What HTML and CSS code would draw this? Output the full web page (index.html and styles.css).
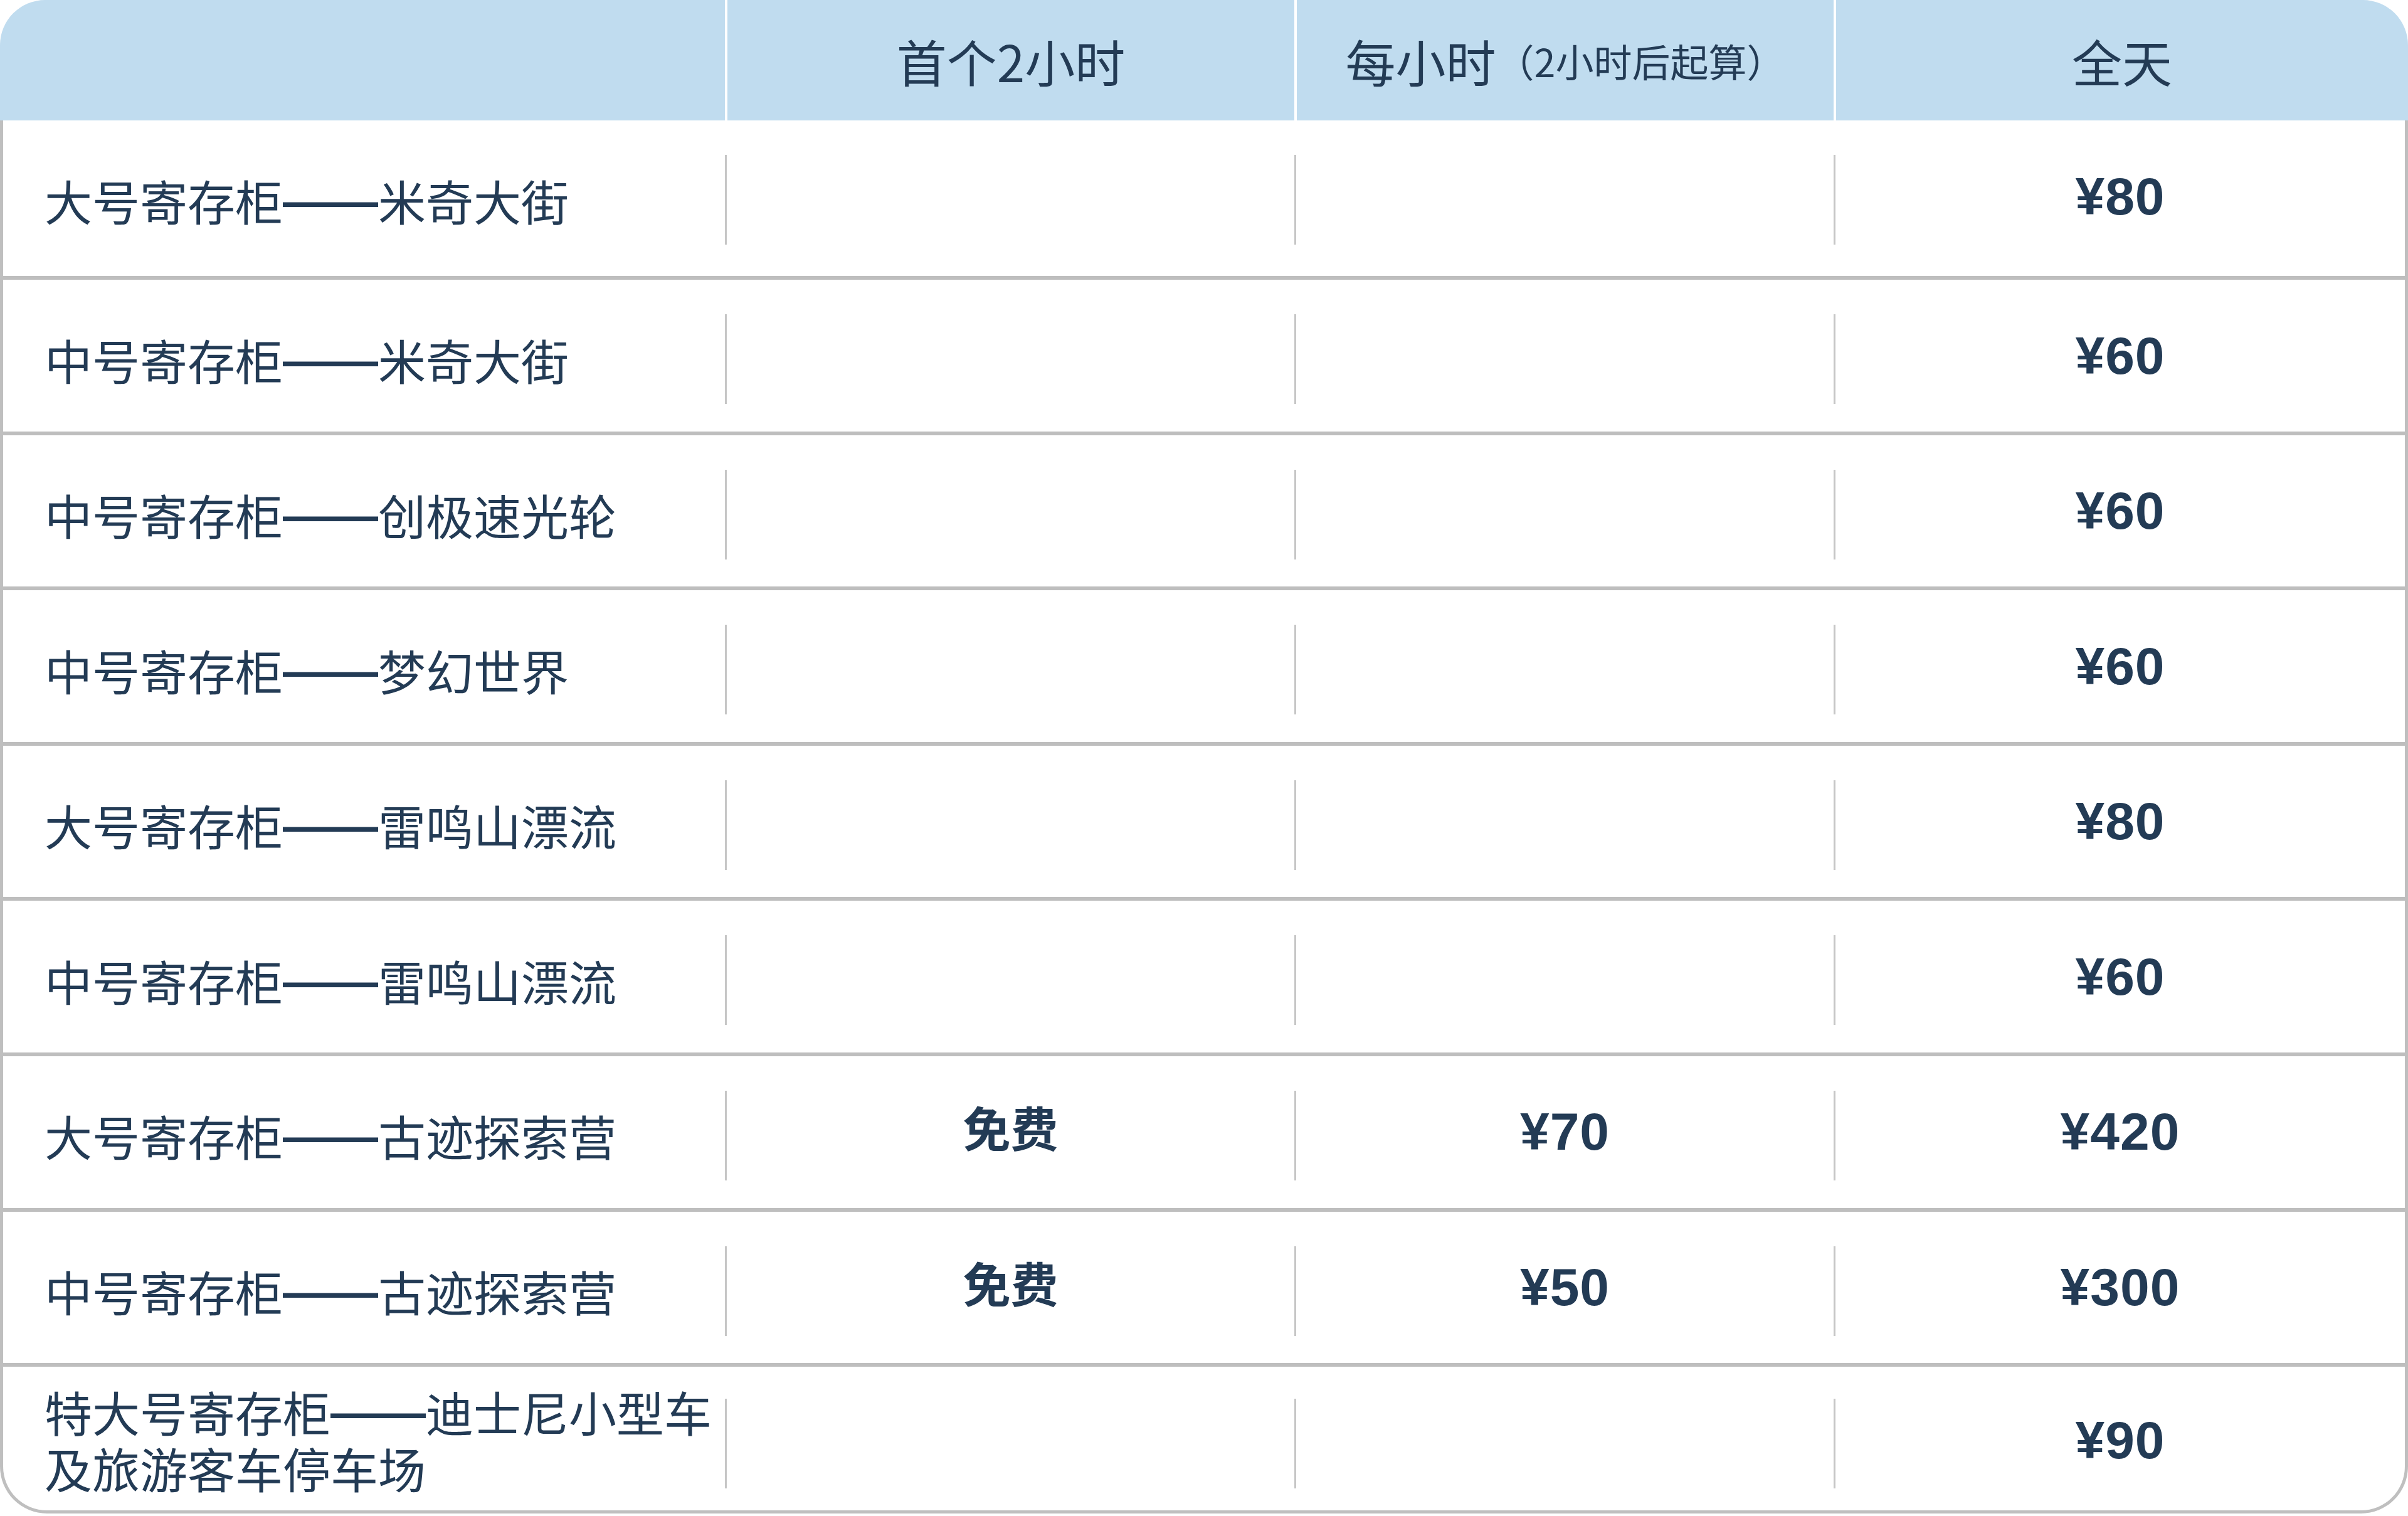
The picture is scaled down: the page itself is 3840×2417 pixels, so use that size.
FILE: index.html
```html
<!DOCTYPE html>
<html lang="zh-CN">
<head>
<meta charset="utf-8">
<title>寄存柜价格</title>
<link rel="stylesheet" href="styles.css">
</head>
<body>
<div class="table">
  <div class="head">
    <div class="th"></div>
    <div class="th">首个2小时</div>
    <div class="th">每小时<span class="note">（2小时后起算）</span></div>
    <div class="th">全天</div>
  </div>
  <div class="body">
    <div class="row">
      <div class="cell name"><span class="txt">大号寄存柜<span class="dash">——</span>米奇大街</span></div>
      <div class="cell"></div>
      <div class="cell"></div>
      <div class="cell"><span class="price">¥80</span></div>
    </div>
    <div class="row">
      <div class="cell name"><span class="txt">中号寄存柜<span class="dash">——</span>米奇大街</span></div>
      <div class="cell"></div>
      <div class="cell"></div>
      <div class="cell"><span class="price">¥60</span></div>
    </div>
    <div class="row">
      <div class="cell name"><span class="txt">中号寄存柜<span class="dash">——</span>创极速光轮</span></div>
      <div class="cell"></div>
      <div class="cell"></div>
      <div class="cell"><span class="price">¥60</span></div>
    </div>
    <div class="row">
      <div class="cell name"><span class="txt">中号寄存柜<span class="dash">——</span>梦幻世界</span></div>
      <div class="cell"></div>
      <div class="cell"></div>
      <div class="cell"><span class="price">¥60</span></div>
    </div>
    <div class="row">
      <div class="cell name"><span class="txt">大号寄存柜<span class="dash">——</span>雷鸣山漂流</span></div>
      <div class="cell"></div>
      <div class="cell"></div>
      <div class="cell"><span class="price">¥80</span></div>
    </div>
    <div class="row">
      <div class="cell name"><span class="txt">中号寄存柜<span class="dash">——</span>雷鸣山漂流</span></div>
      <div class="cell"></div>
      <div class="cell"></div>
      <div class="cell"><span class="price">¥60</span></div>
    </div>
    <div class="row">
      <div class="cell name"><span class="txt">大号寄存柜<span class="dash">——</span>古迹探索营</span></div>
      <div class="cell"><span class="free">免费</span></div>
      <div class="cell"><span class="price">¥70</span></div>
      <div class="cell"><span class="price">¥420</span></div>
    </div>
    <div class="row">
      <div class="cell name"><span class="txt">中号寄存柜<span class="dash">——</span>古迹探索营</span></div>
      <div class="cell"><span class="free">免费</span></div>
      <div class="cell"><span class="price">¥50</span></div>
      <div class="cell"><span class="price">¥300</span></div>
    </div>
    <div class="row last">
      <div class="cell name">
        <div class="lines">
          <span class="line">特大号寄存柜<span class="dash">——</span>迪士尼小型车</span>
          <span class="line">及旅游客车停车场</span>
        </div>
      </div>
      <div class="cell"></div>
      <div class="cell"></div>
      <div class="cell"><span class="price">¥90</span></div>
    </div>
  </div>
</div>
</body>
</html>
```

FILE: styles.css
```css
html, body {
  margin: 0;
  padding: 0;
  background: #ffffff;
}

body {
  font-family: "Noto Sans CJK SC", "Noto Sans", sans-serif;
  color: #233b55;
}

.table {
  width: 3840px;
}

.head {
  display: grid;
  grid-template-columns: 1156px 908px 860px 916px;
  height: 192px;
  background: #c0dcef;
  border-radius: 72px 72px 0 0;
}

.th {
  display: flex;
  align-items: center;
  justify-content: center;
  font-size: 80px;
  line-height: 1;
  white-space: nowrap;
}

.th + .th {
  border-left: 4px solid #ffffff;
}

.note {
  font-size: 61px;
}

.body {
  border: 5px solid #bfbfbf;
  border-top: 0;
  border-radius: 0 0 75px 75px;
}

.row {
  display: grid;
  grid-template-columns: 1151px 908px 860px 911px;
  align-items: start;
  box-sizing: border-box;
  height: 247.6px;
  padding-top: 55px;
}

.row:first-child {
  height: 248px;
}

.row + .row {
  border-top: 6px solid #bebebe;
}

.row.last {
  height: 235px;
  padding-top: 51px;
}

.cell {
  box-sizing: border-box;
  height: 143px;
  display: flex;
  align-items: center;
  justify-content: center;
}

.cell + .cell {
  border-left: 3px solid #c6c6c6;
}

.name {
  justify-content: flex-start;
  padding-left: 66px;
  padding-right: 10px;
}

.txt {
  font-size: 76px;
  line-height: 90px;
}

.lines {
  display: flex;
  flex-direction: column;
  font-size: 76px;
  margin-top: -14px;
}

.line {
  display: block;
  height: 90px;
  line-height: 90px;
  white-space: nowrap;
}

.dash {
  font-family: "Liberation Sans", Arial, sans-serif;
  font-weight: 700;
  vertical-align: 5px;
  line-height: 1;
}

.price {
  font-family: "Liberation Sans", Arial, sans-serif;
  font-weight: 700;
  font-size: 84px;
  letter-spacing: 1px;
  line-height: 1;
  margin-top: -12px;
}

.free {
  font-weight: 700;
  font-size: 76px;
  line-height: 1;
  margin-top: -28px;
}
```
